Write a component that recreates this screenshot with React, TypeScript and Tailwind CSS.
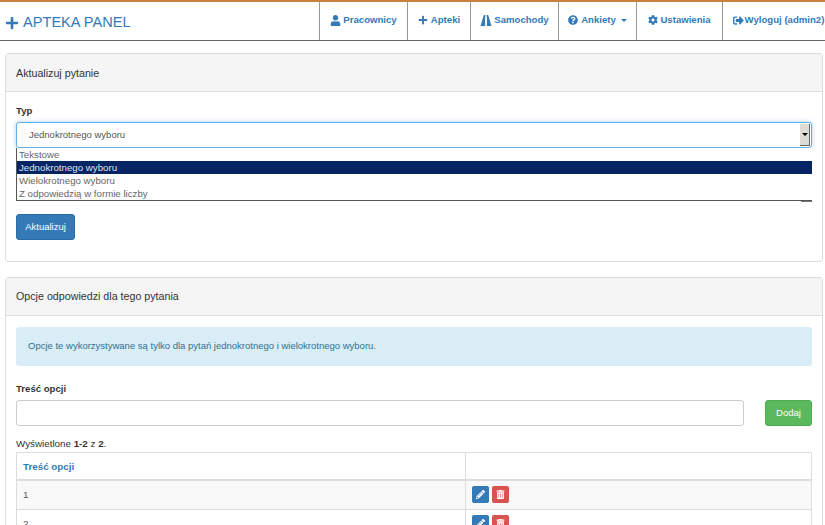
import { FaCog, FaPencilAlt, FaPlus, FaQuestionCircle, FaSignOutAlt, FaTrashAlt, FaUser } from 'react-icons/fa';

function RoadIcon() {
  return (
    <svg viewBox="0 0 12 12" className="w-[12px] h-[11px]" fill="currentColor">
      <polygon points="3.6,0 5.3,0 5,4 5,12 0,12" />
      <polygon points="6.7,0 8.4,0 12,12 7,12 7,4" />
    </svg>
  );
}

const navItems = [
  { label: 'Pracownicy', icon: <FaUser className="w-[11px] h-[11px]" />, width: 'w-[88px]', gap: 'gap-[2px]' },
  { label: 'Apteki', icon: <FaPlus className="w-[10px] h-[10px]" />, width: 'w-[63px]', gap: 'gap-[3px]' },
  { label: 'Samochody', icon: <RoadIcon />, width: 'w-[88px]', gap: 'gap-[2px]' },
  { label: 'Ankiety', icon: <FaQuestionCircle className="w-[10px] h-[10px]" />, width: 'w-[78px]', gap: 'gap-[3px]', caret: true },
  { label: 'Ustawienia', icon: <FaCog className="w-[10px] h-[10px]" />, width: 'w-[86px]', gap: 'gap-[2px]' },
  { label: 'Wyloguj (admin2)', icon: <FaSignOutAlt className="w-[11px] h-[11px]" />, width: 'w-[103px]', gap: 'gap-[1px] pl-[9px]' },
];

const options = ['Tekstowe', 'Jednokrotnego wyboru', 'Wielokrotnego wyboru', 'Z odpowiedzią w formie liczby'];

function Row({ value, striped }: { value: string; striped?: boolean }) {
  return (
    <div className={`grid grid-cols-[449px_1fr] h-[29px] border-b border-[#dddddd] ${striped ? 'bg-[#f9f9f9]' : 'bg-white'}`}>
      <div className="border-r border-[#dddddd] pl-[6px] pt-[7px] text-[#555555]">{value}</div>
      <div className="flex gap-[3px] pl-[6px] pt-[5px]">
        <span className="flex items-center justify-center w-[17px] h-[17px] rounded-[2px] bg-[#337ab7] text-white">
          <FaPencilAlt className="w-[9px] h-[9px]" />
        </span>
        <span className="flex items-center justify-center w-[17px] h-[17px] rounded-[2px] bg-[#d9534f] text-white">
          <FaTrashAlt className="w-[9px] h-[9px]" />
        </span>
      </div>
    </div>
  );
}

export default function App() {
  return (
    <div className="h-[525px] w-[825px] overflow-hidden bg-white text-[#333333] text-[9.8px] font-['Liberation_Sans',Arial,sans-serif]">
      <nav className="flex h-[41px] items-stretch justify-between border-t-2 border-b border-t-[#c8803c] border-b-[#666666] bg-white">
        <div className="flex items-center gap-[4px] pl-[5px] pt-[3px] text-[14.6px] text-[#337ab7]">
          <FaPlus className="w-[14px] h-[14px]" />
          <span>APTEKA PANEL</span>
        </div>
        <div className="flex text-[9.6px] font-bold text-[#337ab7]">
          {navItems.map((item) => (
            <div key={item.label} className={`flex items-center justify-center border-l border-[#999999] pb-[2px] ${item.gap} ${item.width}`}>
              {item.icon}
              <span>{item.label}</span>
              {item.caret && <span className="ml-[2px] mt-[1px] border-x-[3px] border-t-[3px] border-x-transparent border-t-[#337ab7]" />}
            </div>
          ))}
        </div>
      </nav>

      <div className="flex flex-col gap-[15px] pl-[5px] pr-[2px] pt-[12px]">
        <section className="h-[209px] rounded-[3px] border border-[#dddddd]">
          <div className="flex h-[38px] items-center border-b border-[#dddddd] bg-[#f5f5f5] pl-[10px] pt-[1px] text-[10.7px]">Aktualizuj pytanie</div>
          <div className="px-[10px] pt-[13px]">
            <label className="block text-[9.6px] font-bold leading-[12px]">Typ</label>
            <div className="relative mt-[5px]">
              <div className="flex h-[26px] items-center justify-between rounded-[3px] border border-[#66afe9] bg-white pl-[12px] pr-[1px] shadow-[0_0_4px_rgba(102,175,233,0.6)] text-[#555555] text-[9.5px]">
                <span>Jednokrotnego wyboru</span>
                <span className="flex h-[22px] w-[10px] items-center justify-center border-r border-b border-[#666666] bg-[#dedbd5]">
                  <span className="border-x-[3px] border-t-[3px] border-x-transparent border-t-black" />
                </span>
              </div>
              <div className="absolute left-0 right-0 top-[26px] z-10 h-[53px] border-l border-b border-[#555555] bg-white text-[9.7px] leading-[13px] text-[#666666]">
                {options.map((o, i) => (
                  <div key={o} className={`pl-[2px] h-[13px] ${i === 1 ? 'bg-[#052464] text-[#dfe4ee]' : ''}`}>{o}</div>
                ))}
                <span className="absolute right-0 bottom-[-2px] h-[1px] w-[11px] bg-[#777777]" />
              </div>
            </div>
            <button className="mt-[66px] block h-[26px] w-[59px] rounded-[3px] border border-[#2e6da4] bg-[#337ab7] text-[9.5px] text-white">Aktualizuj</button>
          </div>
        </section>

        <section className="rounded-[3px] border border-[#dddddd]">
          <div className="flex h-[38px] items-center border-b border-[#dddddd] bg-[#f5f5f5] pl-[10px] text-[10.7px]">Opcje odpowiedzi dla tego pytania</div>
          <div className="px-[10px] pt-[11px]">
            <div className="flex h-[39px] items-center rounded-[3px] bg-[#d9edf7] pl-[12px] text-[9.5px] text-[#31708f]">
              Opcje te wykorzystywane są tylko dla pytań jednokrotnego i wielokrotnego wyboru.
            </div>
            <label className="mt-[17px] block text-[9.6px] font-bold leading-[12px]">Treść opcji</label>
            <div className="mt-[5px] flex justify-between">
              <div className="h-[26px] w-[728px] rounded-[3px] border border-[#cccccc] bg-white" />
              <button className="h-[26px] w-[47px] rounded-[3px] border border-[#4cae4c] bg-[#5cb85c] text-[9.5px] text-white">Dodaj</button>
            </div>
            <p className="mt-[12px] leading-[12px]">Wyświetlone <b>1-2</b> z <b>2</b>.</p>
            <div className="mt-[2px] border-x border-t border-[#dddddd]">
              <div className="grid grid-cols-[449px_1fr] h-[28px] border-b-2 border-[#dddddd]">
                <div className="border-r border-[#dddddd] pl-[6px] pt-[7px] font-bold text-[#337ab7]">Treść opcji</div>
                <div />
              </div>
              <Row value="1" striped />
              <Row value="2" />
            </div>
          </div>
        </section>
      </div>
    </div>
  );
}
